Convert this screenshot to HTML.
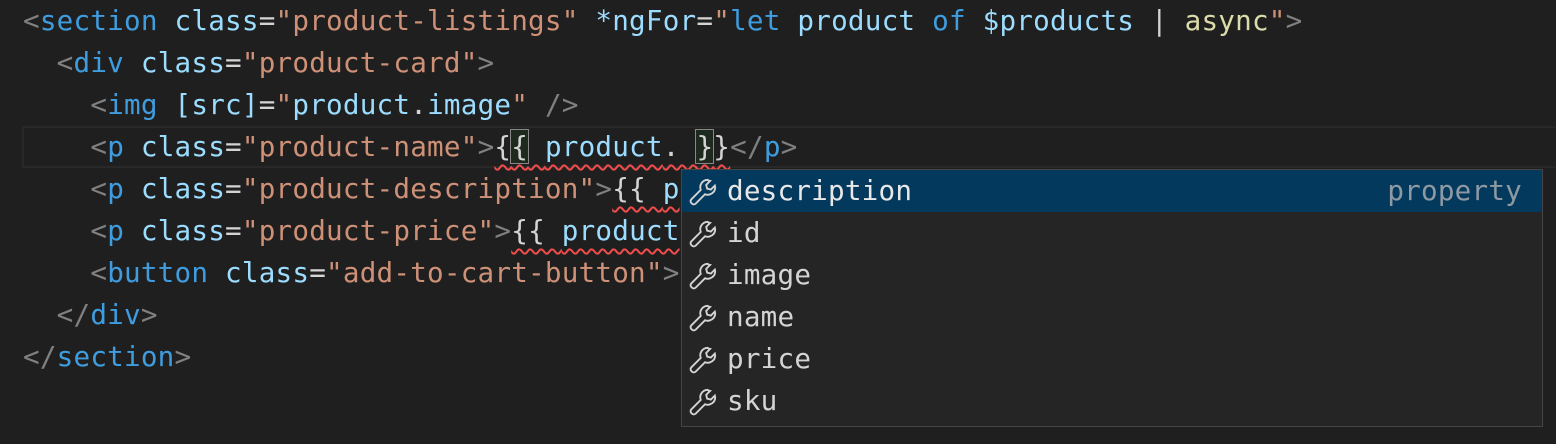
<!DOCTYPE html>
<html><head><style>
html,body{margin:0;padding:0;background:#1f1f1f;width:1556px;height:444px;overflow:hidden}
.ed{position:absolute;left:23px;top:0px;font-family:"DejaVu Sans Mono",monospace;font-size:27.6px;letter-spacing:0.22px;line-height:42px;white-space:pre;color:#d4d4d4}
.cur{position:absolute;left:22px;top:126px;width:1534px;height:38px;border:2px solid #282828;border-right:none}
.p{color:#808080}.t{color:#3f9ddf}.a{color:#9cdcfe}.s{color:#ce9178}.f{color:#dcdcaa}.v{color:#9cdcfe}
.sq{text-decoration:underline wavy #f14c4c;text-decoration-thickness:1.5px;text-underline-offset:8px}
.br{outline:1.5px solid #888;background:#1d2a1d}
.sug{position:absolute;left:681px;top:169px;width:860px;height:256px;background:#252526;border:1px solid #454545}
.row{height:42px;position:relative;font-family:"DejaVu Sans Mono",monospace;font-size:27.6px;letter-spacing:0.22px;line-height:42px;color:#d4d4d4}
.row.sel{background:#04395e;color:#e8e8e8}
.row svg{position:absolute;left:6px;top:7px}
.row .l{position:absolute;left:45px;top:0px}
.row .r{position:absolute;right:20px;top:0px;color:#8e9aa3}
</style></head><body>
<div class="cur"></div>
<div class="ed"><span class="p">&lt;</span><span class="t">section</span> <span class="a">class</span>=<span class="s">"product-listings"</span> <span class="a">*ngFor</span>=<span class="s">"</span><span class="t">let</span> <span class="v">product</span> <span class="t">of</span> <span class="v">$products</span> | <span class="f">async</span><span class="s">"</span><span class="p">&gt;</span>
  <span class="p">&lt;</span><span class="t">div</span> <span class="a">class</span>=<span class="s">"product-card"</span><span class="p">&gt;</span>
    <span class="p">&lt;</span><span class="t">img</span> <span class="a">[src]</span>=<span class="s">"</span><span class="v">product</span>.<span class="v">image</span><span class="s">"</span> <span class="p">/&gt;</span>
    <span class="p">&lt;</span><span class="t">p</span> <span class="a">class</span>=<span class="s">"product-name"</span><span class="p">&gt;</span><span class="sq">{<span class="br">{</span> <span class="v">product</span>. <span class="br">}</span>}</span><span class="p">&lt;/</span><span class="t">p</span><span class="p">&gt;</span>
    <span class="p">&lt;</span><span class="t">p</span> <span class="a">class</span>=<span class="s">"product-description"</span><span class="p">&gt;</span><span class="sq">{{ <span class="v">p</span></span>
    <span class="p">&lt;</span><span class="t">p</span> <span class="a">class</span>=<span class="s">"product-price"</span><span class="p">&gt;</span><span class="sq">{{ <span class="v">product</span></span>
    <span class="p">&lt;</span><span class="t">button</span> <span class="a">class</span>=<span class="s">"add-to-cart-button"</span><span class="p">&gt;</span>
  <span class="p">&lt;/</span><span class="t">div</span><span class="p">&gt;</span>
<span class="p">&lt;/</span><span class="t">section</span><span class="p">&gt;</span></div>
<div class="sug">
<div class="row sel"><svg width="30" height="30" viewBox="0 0 16 16" fill="none" stroke="#d4d4d4" stroke-width="1"><path d="M10.5 1.5a4 4 0 0 0-3.7 5.4L1.8 11.9a1.4 1.4 0 0 0 0 2l.3.3a1.4 1.4 0 0 0 2 0l5-5a4 4 0 0 0 5.4-3.7l-.2-.9-2.1 2.1-2-.5-.5-2 2.1-2.1-.9-.2z"/></svg><span class="l">description</span><span class="r">property</span></div>
<div class="row"><svg width="30" height="30" viewBox="0 0 16 16" fill="none" stroke="#d4d4d4" stroke-width="1"><path d="M10.5 1.5a4 4 0 0 0-3.7 5.4L1.8 11.9a1.4 1.4 0 0 0 0 2l.3.3a1.4 1.4 0 0 0 2 0l5-5a4 4 0 0 0 5.4-3.7l-.2-.9-2.1 2.1-2-.5-.5-2 2.1-2.1-.9-.2z"/></svg><span class="l">id</span></div>
<div class="row"><svg width="30" height="30" viewBox="0 0 16 16" fill="none" stroke="#d4d4d4" stroke-width="1"><path d="M10.5 1.5a4 4 0 0 0-3.7 5.4L1.8 11.9a1.4 1.4 0 0 0 0 2l.3.3a1.4 1.4 0 0 0 2 0l5-5a4 4 0 0 0 5.4-3.7l-.2-.9-2.1 2.1-2-.5-.5-2 2.1-2.1-.9-.2z"/></svg><span class="l">image</span></div>
<div class="row"><svg width="30" height="30" viewBox="0 0 16 16" fill="none" stroke="#d4d4d4" stroke-width="1"><path d="M10.5 1.5a4 4 0 0 0-3.7 5.4L1.8 11.9a1.4 1.4 0 0 0 0 2l.3.3a1.4 1.4 0 0 0 2 0l5-5a4 4 0 0 0 5.4-3.7l-.2-.9-2.1 2.1-2-.5-.5-2 2.1-2.1-.9-.2z"/></svg><span class="l">name</span></div>
<div class="row"><svg width="30" height="30" viewBox="0 0 16 16" fill="none" stroke="#d4d4d4" stroke-width="1"><path d="M10.5 1.5a4 4 0 0 0-3.7 5.4L1.8 11.9a1.4 1.4 0 0 0 0 2l.3.3a1.4 1.4 0 0 0 2 0l5-5a4 4 0 0 0 5.4-3.7l-.2-.9-2.1 2.1-2-.5-.5-2 2.1-2.1-.9-.2z"/></svg><span class="l">price</span></div>
<div class="row"><svg width="30" height="30" viewBox="0 0 16 16" fill="none" stroke="#d4d4d4" stroke-width="1"><path d="M10.5 1.5a4 4 0 0 0-3.7 5.4L1.8 11.9a1.4 1.4 0 0 0 0 2l.3.3a1.4 1.4 0 0 0 2 0l5-5a4 4 0 0 0 5.4-3.7l-.2-.9-2.1 2.1-2-.5-.5-2 2.1-2.1-.9-.2z"/></svg><span class="l">sku</span></div>
</div>
</body></html>
